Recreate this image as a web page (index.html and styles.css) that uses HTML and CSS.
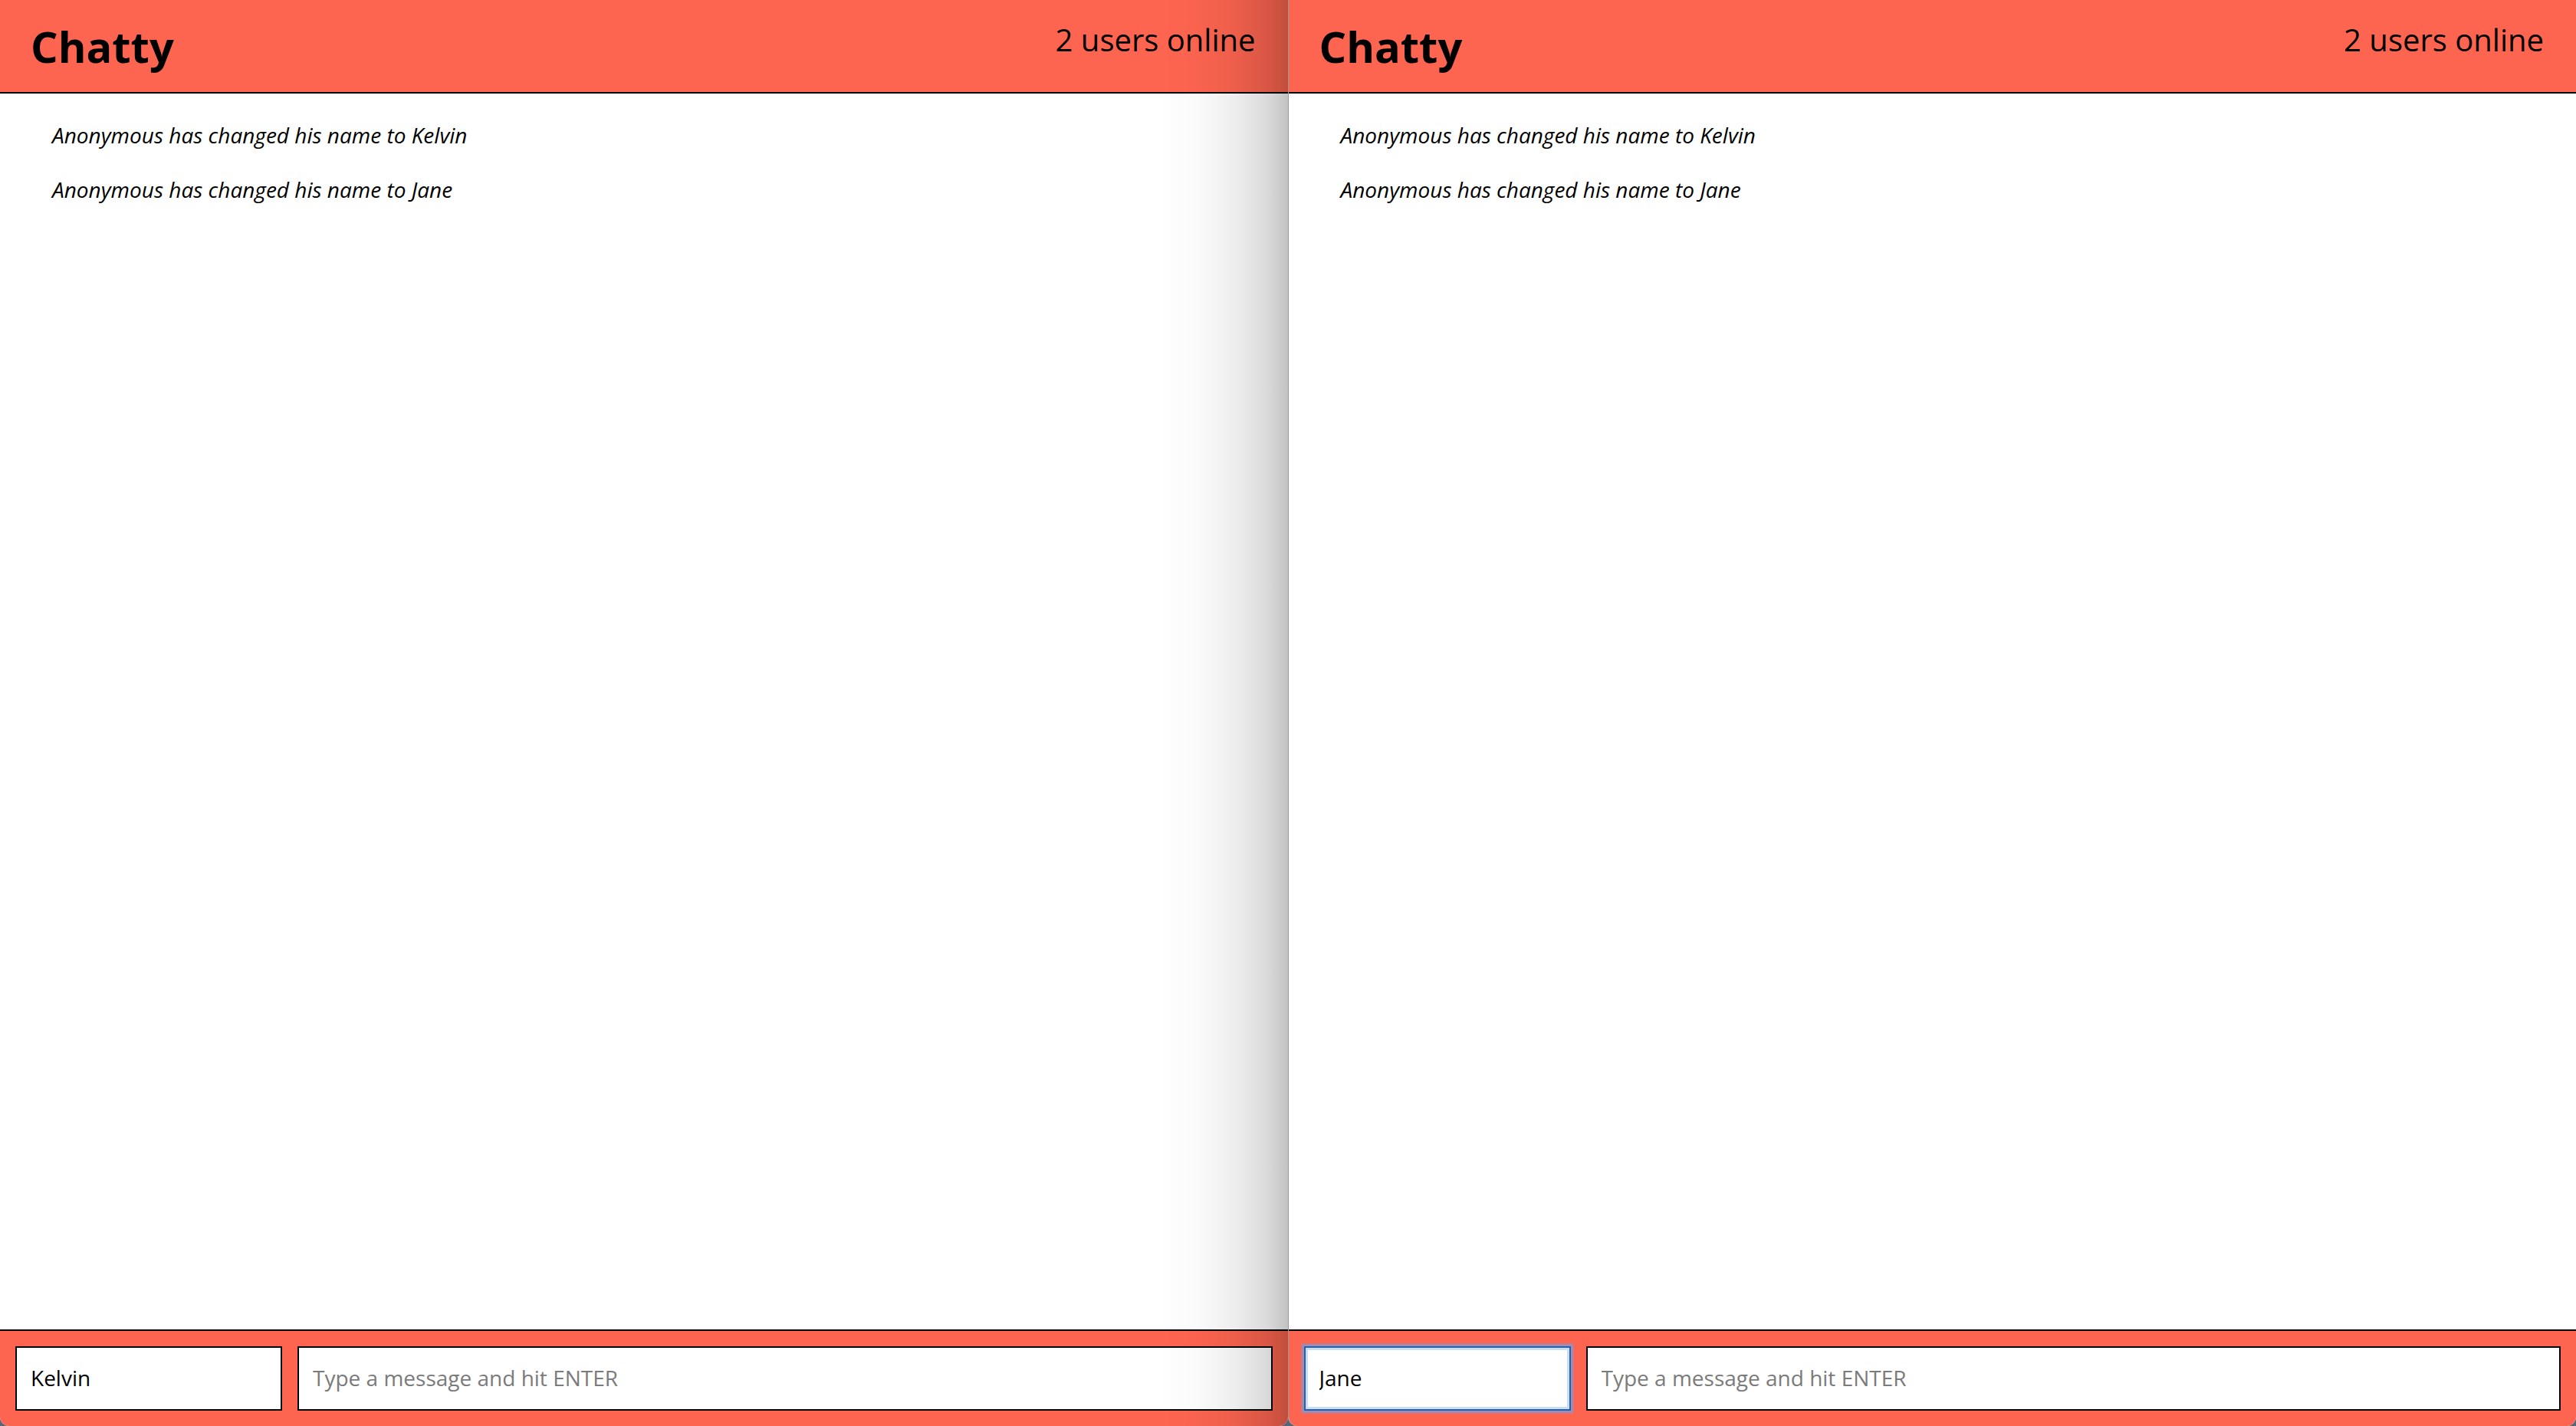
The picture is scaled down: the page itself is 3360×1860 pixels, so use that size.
FILE: index.html
```html
<!DOCTYPE html>
<html lang="en">
<head>
<meta charset="utf-8">
<title>Chatty</title>
<link rel="stylesheet" href="styles.css">
</head>
<body>
<div class="desktop">
  <div class="window window-back">
    <header class="navbar">
      <h1 class="brand">Chatty</h1>
      <span class="online">2 users online</span>
    </header>
    <main class="messages">
      <div class="notice">Anonymous has changed his name to Kelvin</div>
      <div class="notice">Anonymous has changed his name to Jane</div>
    </main>
    <footer class="chatbar">
      <input class="chatbar-username" type="text" value="Kelvin">
      <input class="chatbar-message" type="text" placeholder="Type a message and hit ENTER">
    </footer>
  </div>
  <div class="window window-front">
    <header class="navbar">
      <h1 class="brand">Chatty</h1>
      <span class="online">2 users online</span>
    </header>
    <main class="messages">
      <div class="notice">Anonymous has changed his name to Kelvin</div>
      <div class="notice">Anonymous has changed his name to Jane</div>
    </main>
    <footer class="chatbar">
      <input class="chatbar-username is-focused" type="text" value="Jane">
      <input class="chatbar-message" type="text" placeholder="Type a message and hit ENTER">
    </footer>
  </div>
</div>
</body>
</html>
```
FILE: styles.css
```css
html, body {
  margin: 0;
  padding: 0;
  height: 100%;
}

body {
  background: #56657a;
  font-family: "Open Sans", "DejaVu Sans", sans-serif;
  color: #000;
  overflow: hidden;
}

.desktop {
  display: flex;
  height: 1860px;
  width: 3360px;
}

.window {
  flex: 1 1 0;
  display: flex;
  flex-direction: column;
  background: #fff;
  position: relative;
  border-radius: 0 0 12px 12px;
  overflow: hidden;
}

.window-front {
  border-left: 1px solid #9a9a9a;
}

/* shadow cast by the front window onto the one behind it */
.window-back::after {
  content: "";
  position: absolute;
  top: 0;
  right: 0;
  bottom: 0;
  width: 170px;
  background: linear-gradient(to right,
    rgba(0, 0, 0, 0) 0%,
    rgba(0, 0, 0, 0.02) 30%,
    rgba(0, 0, 0, 0.07) 60%,
    rgba(0, 0, 0, 0.15) 85%,
    rgba(0, 0, 0, 0.24) 100%);
  pointer-events: none;
}

.navbar {
  display: flex;
  justify-content: space-between;
  align-items: flex-start;
  height: 122px;
  box-sizing: border-box;
  padding: 32px 42px 0 40px;
  background: #fe6550;
  border-bottom: 2px solid #000;
  flex: none;
}

.brand {
  margin: 0;
  font-size: 56px;
  line-height: 56px;
  font-weight: 700;
}

.online {
  font-size: 40px;
  line-height: 40px;
  font-weight: 400;
}

.messages {
  flex: 1;
  padding: 19px 0 0 68px;
}

.notice {
  font-size: 28px;
  line-height: 71px;
  font-style: italic;
}

.chatbar {
  flex: none;
  display: flex;
  gap: 20px;
  height: 126px;
  box-sizing: border-box;
  padding: 20px;
  background: #fe6550;
  border-top: 2px solid #000;
}

.chatbar input {
  height: 84px;
  box-sizing: border-box;
  border: 2px solid #000;
  border-radius: 0;
  padding: 0 18px 3px;
  margin: 0;
  font-family: "Open Sans", "DejaVu Sans", sans-serif;
  font-size: 28px;
  color: #000;
  background: #fff;
  outline: none;
}

.chatbar input::placeholder {
  color: #7b7b7b;
}

.chatbar-username {
  width: 348px;
  flex: none;
}

.chatbar-message {
  flex: 1;
  min-width: 0;
}

.chatbar .is-focused {
  border-color: #2d5e9f;
  box-shadow: inset 0 0 0 3px #c8def7, 0 0 2px 3px rgba(110, 160, 235, 0.75);
}
```
